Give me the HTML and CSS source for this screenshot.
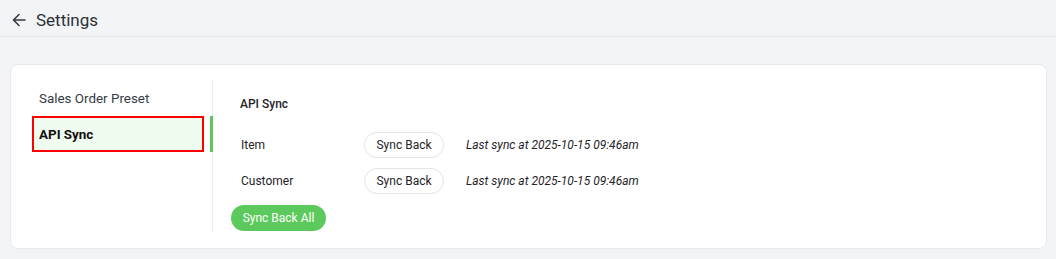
FILE: index.html
```html
<!DOCTYPE html>
<html>
<head>
<meta charset="utf-8">
<link rel="stylesheet" href="styles.css">
</head>
<body>
<header class="topbar">
  <svg class="back" width="14" height="14" viewBox="0 0 14 14"><path d="M13 7H1.5M7 1.5L1.5 7L7 12.5" fill="none" stroke="#333a44" stroke-width="1.6" stroke-linecap="round" stroke-linejoin="round"/></svg>
  <span class="title">Settings</span>
</header>
<main class="card">
  <nav class="sidebar">
    <div class="nav-item"><span class="nav-label">Sales Order Preset</span></div>
    <div class="nav-item active"><span class="nav-label">API Sync</span><span class="nav-bar"></span></div>
  </nav>
  <section class="content">
    <h2 class="section-title">API Sync</h2>
    <div class="row">
      <span class="row-label">Item</span>
      <button class="btn-outline">Sync Back</button>
      <span class="last-sync">Last sync at 2025-10-15 09:46am</span>
    </div>
    <div class="row">
      <span class="row-label">Customer</span>
      <button class="btn-outline">Sync Back</button>
      <span class="last-sync">Last sync at 2025-10-15 09:46am</span>
    </div>
    <button class="btn-green">Sync Back All</button>
  </section>
</main>
</body>
</html>
```
FILE: styles.css
```css
* { box-sizing: border-box; }
html, body { margin: 0; padding: 0; }
body {
  background: #f3f4f6;
  font-family: Roboto, "Liberation Sans", sans-serif;
  color: #1f2329;
  width: 1056px;
  height: 259px;
  overflow: hidden;
}
.topbar {
  height: 37px;
  border-bottom: 1px solid #e4e6e9;
  display: flex;
  align-items: center;
  padding: 3px 0 0 12px;
}
.back { display: block; margin-right: 10px; }
.title { font-size: 17px; color: #2b3038; }
.card {
  margin: 27px 9px 0 10px;
  background: #fff;
  border: 1px solid #e8eaed;
  border-radius: 8px;
  height: 185px;
  display: flex;
  padding: 15px 0 15px 21px;
}
.sidebar {
  width: 181px;
  border-right: 1px solid #eeeff1;
  display: flex;
  flex-direction: column;
}
.nav-item {
  height: 36px;
  display: flex;
  align-items: center;
  gap: 6px;
}
.nav-label {
  width: 172px;
  height: 36px;
  display: flex;
  align-items: center;
  padding-left: 7px;
  font-size: 13.4px;
  color: #333a44;
}
.nav-item.active .nav-label {
  background: #f1fcf0;
  border: 2px solid #f00;
  padding-left: 5px;
  font-weight: 700;
  color: #111;
}
.nav-bar {
  width: 3px;
  height: 36px;
  background: #5bc85b;
  margin-right: -1px;
}
.content {
  padding: 0 0 0 18px;
  display: flex;
  flex-direction: column;
  align-items: flex-start;
}
.section-title {
  margin: 14px 0 18px 9px;
  font-size: 12px;
  font-weight: 500;
  line-height: 20px;
  color: #1f2329;
}
.row {
  display: flex;
  align-items: center;
  height: 26px;
  margin-bottom: 10px;
  padding-left: 10px;
}
.row-label {
  width: 123px;
  font-size: 12px;
  color: #1f2329;
}
.btn-outline {
  width: 80px;
  height: 26px;
  border: 1px solid #e2e4e8;
  background: #fff;
  border-radius: 13px;
  font-family: inherit;
  font-size: 12px;
  color: #1f2329;
  padding: 0;
  margin-right: 22px;
}
.last-sync {
  font-size: 12px;
  font-style: italic;
  color: #1f2329;
}
.btn-green {
  margin-top: 1px;
  width: 95px;
  height: 26px;
  border: none;
  border-radius: 13px;
  background: #5cc95c;
  color: #fff;
  font-family: inherit;
  font-size: 12px;
  padding: 0;
}
```
